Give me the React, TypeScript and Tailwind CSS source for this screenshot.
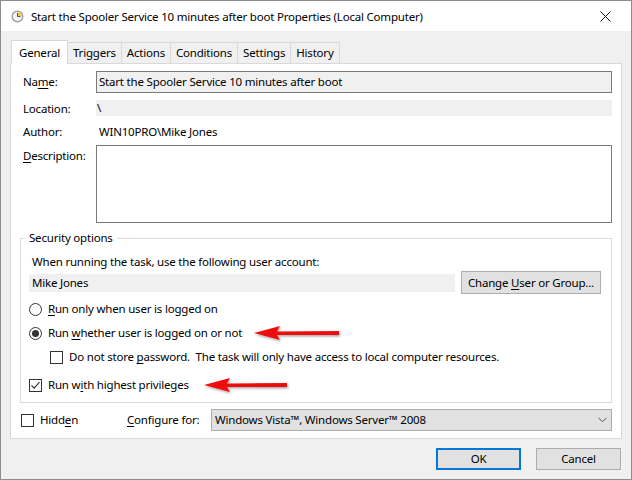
import React from 'react';

const font = { fontFamily: '"Noto Sans", "Segoe UI", sans-serif' };

// Underlined accelerator letter
const U: React.FC<{ children: React.ReactNode }> = ({ children }) => <span className="underline underline-offset-2">{children}</span>;

const Check: React.FC<{ checked?: boolean }> = ({ checked }) => (
    <span className="w-[13px] h-[13px] border border-[#333] bg-white flex items-center justify-center shrink-0">
        {checked && (
            <svg width="11" height="11" viewBox="0 0 11 11">
                <path d="M1.5 5.5 L4.2 8.2 L9.5 2.2" fill="none" stroke="#333" strokeWidth="1.1" />
            </svg>
        )}
    </span>
);

const Radio: React.FC<{ checked?: boolean }> = ({ checked }) => (
    <span className="w-[13px] h-[13px] rounded-full border border-[#333] bg-white flex items-center justify-center shrink-0">
        {checked && <span className="w-[7px] h-[7px] rounded-full bg-[#333]" />}
    </span>
);

const RedArrow: React.FC<{ className: string; width: number }> = ({ className, width }) => (
    <svg className={className} width={width} height="18" viewBox={`0 0 ${width} 18`}>
        <defs>
            <filter id="sh" x="-10%" y="-50%" width="120%" height="200%">
                <feDropShadow dx="1" dy="1.5" stdDeviation="1" floodColor="#000" floodOpacity="0.35" />
            </filter>
        </defs>
        <path d={`M1 8 L27 1 L24 6.5 L${width - 3} 6 L${width - 3} 10 L24 10 L27 15 Z`} fill="#ee1111" filter="url(#sh)" />
    </svg>
);

export default function App() {
    const tabs = ['Triggers', 'Actions', 'Conditions', 'Settings', 'History'];
    return (
        <div className="w-[632px] h-[480px] bg-[#f0f0f0] border border-[#8c8c8c] flex flex-col text-[11.5px] tracking-[-0.2px] text-black relative overflow-hidden" style={font}>
            {/* Title bar */}
            <div className="h-[30px] bg-white flex items-center shrink-0">
                <svg className="ml-[10px]" width="13" height="13" viewBox="0 0 13 13">
                    <circle cx="6.5" cy="6.5" r="6" fill="#9aa0a6" />
                    <circle cx="6.5" cy="6.5" r="4.6" fill="#f4f4f4" />
                    <path d="M6.5 6.5 L6.5 2.2 A4.3 4.3 0 0 1 10.8 6.5 Z" fill="#f0c84a" />
                    <path d="M6.5 3 L6.5 6.5 L9.5 6.5" fill="none" stroke="#555" strokeWidth="1" />
                </svg>
                <span className="ml-[7px] mt-[1px]">Start the Spooler Service 10 minutes after boot Properties (Local Computer)</span>
                <svg className="ml-auto mr-[20px]" width="11" height="11" viewBox="0 0 11 11">
                    <path d="M0.5 0.5 L10.5 10.5 M10.5 0.5 L0.5 10.5" stroke="#111" strokeWidth="1" />
                </svg>
            </div>

            {/* Tabs */}
            <div className="flex items-end pl-[10px] pt-[8px] h-[32px] shrink-0">
                <div className="h-[24px] px-[7px] bg-white border border-b-0 border-[#d9d9d9] flex items-center relative z-10 -mb-px">General</div>
                {tabs.map(t => (
                    <div key={t} className="h-[21px] px-[5px] bg-[#f0f0f0] border border-l-0 border-b-0 border-[#d9d9d9] flex items-center">{t}</div>
                ))}
            </div>

            {/* Tab panel */}
            <div className="mx-[9px] h-[376px] bg-white border border-[#d9d9d9] pl-[12px] pr-[9px] pt-[7px] flex flex-col shrink-0">
                <div className="flex items-center h-[22px]">
                    <span className="w-[73px]">Na<U>m</U>e:</span>
                    <div className="flex-1 h-[22px] bg-[#f0f0f0] border border-[#7a7a7a] flex items-center px-[2px]">Start the Spooler Service 10 minutes after boot</div>
                </div>
                <div className="flex items-center h-[16px] mt-[7px]">
                    <span className="w-[73px] pt-[1px]">Location:</span>
                    <div className="flex-1 h-[16px] bg-[#f0f0f0] flex items-center pl-[1px]">\</div>
                </div>
                <div className="flex items-center h-[16px] mt-[8px]">
                    <span className="w-[73px]">Author:</span>
                    <span className="pl-[3px]">WIN10PRO\Mike Jones</span>
                </div>
                <div className="flex mt-[5px]">
                    <span className="w-[73px] pt-[2px]"><U>D</U>escription:</span>
                    <div className="flex-1 h-[78px] bg-white border border-[#7a7a7a]" />
                </div>

                {/* Security options */}
                <fieldset className="mt-[7px] -ml-[3px] border border-[#dcdcdc] h-[173px] px-[8px]">
                    <legend className="-ml-[4px] px-[4px] leading-[16px]">Security options</legend>
                    <div className="pl-[3px] mt-[8px] leading-[16px]">When running the task, use the following user account:</div>
                    <div className="flex items-center mt-[1px] h-[23px]">
                        <div className="w-[426px] h-[18px] bg-[#f0f0f0] flex items-center pl-[3px]">Mike Jones</div>
                        <div className="ml-[6px] w-[140px] h-[23px] bg-[#e1e1e1] border border-[#adadad] flex items-center justify-center">
                            <span>Change <U>U</U>ser or Group...</span>
                        </div>
                    </div>
                    <div className="flex items-center gap-[6px] mt-[7px] h-[16px]">
                        <Radio />
                        <span><U>R</U>un only when user is logged on</span>
                    </div>
                    <div className="flex items-center gap-[6px] mt-[8px] h-[16px]">
                        <Radio checked />
                        <span>Run <U>w</U>hether user is logged on or not</span>
                    </div>
                    <div className="flex items-center gap-[6px] mt-[8px] h-[16px] pl-[21px]">
                        <Check />
                        <span>Do not store <U>p</U>assword.&nbsp; The task will only have access to local computer resources.</span>
                    </div>
                    <div className="flex items-center gap-[6px] mt-[12px] h-[16px]">
                        <Check checked />
                        <span>Run w<U>i</U>th highest privileges</span>
                    </div>
                </fieldset>

                <div className="flex items-center mt-[6px] -ml-[2px] h-[22px]">
                    <Check />
                    <span className="ml-[6px] w-[87px]">Hidd<U>e</U>n</span>
                    <span className="w-[84px]"><U>C</U>onfigure for:</span>
                    <div className="flex-1 h-[22px] bg-[#e1e1e1] border border-[#adadad] flex items-center pl-[3px] pr-[4px]">
                        <span>Windows Vista™, Windows Server™ 2008</span>
                        <svg className="ml-auto" width="9" height="6" viewBox="0 0 9 6">
                            <path d="M0.5 0.8 L4.5 4.8 L8.5 0.8" fill="none" stroke="#555" strokeWidth="1" />
                        </svg>
                    </div>
                </div>
            </div>

            {/* Buttons */}
            <div className="flex justify-end gap-[15px] pr-[10px] mt-[9px]">
                <div className="w-[85px] h-[22px] bg-[#e1e1e1] border-2 border-[#0078d7] flex items-center justify-center">OK</div>
                <div className="w-[85px] h-[22px] bg-[#e1e1e1] border border-[#adadad] flex items-center justify-center">Cancel</div>
            </div>

            {/* Annotation arrows */}
            <RedArrow className="absolute left-[252px] top-[324px]" width={89} />
            <RedArrow className="absolute left-[202px] top-[376px]" width={87} />
        </div>
    );
}
